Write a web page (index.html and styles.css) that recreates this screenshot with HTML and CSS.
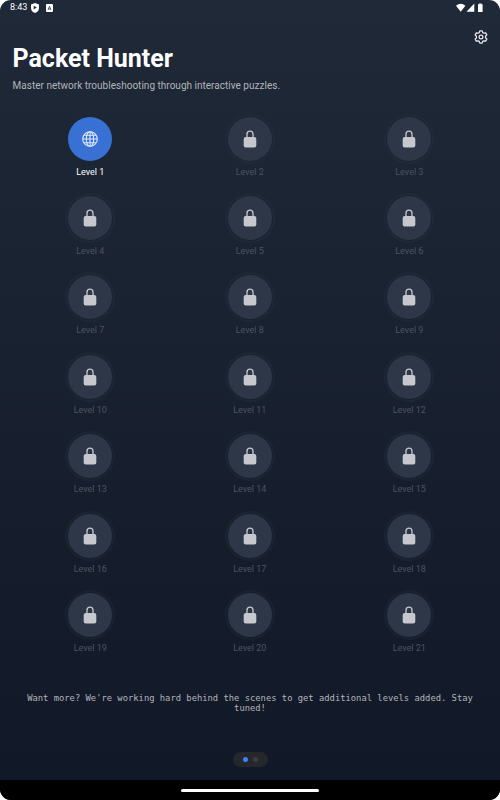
FILE: index.html
```
<!DOCTYPE html>
<html lang="en">
<head>
<meta charset="utf-8">
<title>Packet Hunter</title>
<link rel="stylesheet" href="styles.css">
</head>
<body>
<div class="screen">
  <header class="status">
    <span class="time">8:43</span>
    <svg class="shield" viewBox="0 0 8 10"><path fill="#fff" d="M4 0 8 1.500V5C8 7.500 6.200 9.300 4 10 1.800 9.300 0 7.500 0 5V1.500Z"/><path fill="#1f2937" d="M2.700 2.700 5.800 4.600 2.700 6.500Z"/></svg>
    <svg class="badge" viewBox="0 0 7 8"><rect width="7" height="8" rx="1" fill="#fff"/><path d="M2 6 3.500 2.200 5 6M2.500 4.900h2" fill="none" stroke="#344052" stroke-width=".8"/></svg>
    <svg class="signals" viewBox="0 0 28 10"><path fill="#fff" d="M0 2.700Q4.700-1.300 9.400 2.700L4.700 8.700ZM10.500 8.700 18.300.5v8.200ZM22 1.300h1V.4h2.500v.9h1.100v7.800H22Z"/></svg>
  </header>
  <div class="toolbar">
    <svg class="gear" viewBox="0 0 24 24" fill="none" stroke="#e5e7eb" stroke-width="2.200" stroke-linejoin="round"><path d="M9 4.500 10 1.500h4l1 3 1.800 1 3.200-.6 2 3.500-2.200 2.400v2.400l2.200 2.400-2 3.500-3.200-.6-1.800 1-1 3h-4l-1-3-1.800-1-3.200.6-2-3.500 2.200-2.400v-2.400L2 8.400l2-3.500 3.200.6Z"/><circle cx="12" cy="12" r="3.200"/></svg>
  </div>
  <h1 class="title">Packet Hunter</h1>
  <p class="subtitle">Master network troubleshooting through interactive puzzles.</p>
  <main class="levels" id="levels"></main>
  <p class="more">Want more? We're working hard behind the scenes to get additional levels added. Stay tuned!</p>
  <div class="pager"><i class="dot active"></i><i class="dot"></i></div>
  <footer class="nav"><div class="handle"></div></footer>
</div>
<script src="levels.js"></script>
</body>
</html>
```
FILE: levels.js
```
const globe = '<svg class="globe" viewBox="0 0 16 16" fill="none" stroke="#dbe7fb" stroke-width="1.100"><circle cx="8" cy="8" r="7.300"/><ellipse cx="8" cy="8" rx="3.700" ry="7.300"/><path d="M8 .7v14.600M.7 8h14.600M2 4.300h12M2 11.700h12"/></svg>';
const lock = '<svg class="lock" viewBox="0 0 14 18"><path d="M4 8V4.200a3 3 0 0 1 6 0V8" fill="none" stroke="#c5c8cd" stroke-width="1.300"/><rect x=".7" y="7" width="12.600" height="10.500" rx="2" fill="#c5c8cd"/></svg>';
const grid = document.getElementById('levels');
for (let n = 1; n <= 21; n++) {
  const open = n === 1;
  grid.insertAdjacentHTML('beforeend',
    `<div class="level ${open ? 'open' : 'locked'}"><div class="disc">${open ? globe : lock}</div><span class="label">Level ${n}</span></div>`);
}
```
FILE: styles.css
```
* { box-sizing: border-box; }
body { margin: 0; background: #fff; font-family: Roboto, sans-serif; color: #fff; }
.screen {
  width: 500px; height: 800px; overflow: hidden; border-radius: 11px;
  background: linear-gradient(#1f2937 0, #111827 780px);
  display: flex; flex-direction: column;
}
.status { height: 15px; flex: none; display: flex; align-items: center; padding-left: 10px; }
.time { font-size: 9px; line-height: 15px; width: 18px; white-space: nowrap; }
.shield { width: 8px; height: 10px; margin-left: 3px; }
.badge { width: 7px; height: 8px; margin-left: 7px; }
.signals { width: 28px; height: 10px; margin: 0 16.500px 0 auto; }
.toolbar { height: 30px; flex: none; display: flex; justify-content: flex-end; padding: 15px 12px 0 0; }
.gear { width: 14px; height: 14px; }
.title { margin: 0; padding-left: 12.500px; height: 30px; font-size: 25px; line-height: 27px; font-weight: 700; }
.subtitle { margin: 0; padding: 4px 0 0 12.500px; height: 31px; font-size: 10px; line-height: 13px; color: #b2b5ba; letter-spacing: .015px; }
.levels {
  flex: none; height: 556px; margin: 10.600px 10.900px 0 10.500px;
  display: grid; grid-template-columns: repeat(3, 1fr); grid-template-rows: repeat(7, 1fr);
}
.level { display: flex; flex-direction: column; align-items: center; }
.disc { width: 44px; height: 44px; border-radius: 50%; display: flex; align-items: center; justify-content: center; flex: none; }
.open .disc { background: #3871d3; }
.locked .disc { background: #2e3747; box-shadow: 0 0 0 1px rgba(17, 24, 39, .3), 0 0 0 3px rgba(52, 64, 80, .18); }
.globe { width: 16px; height: 16px; }
.lock { width: 14px; height: 18px; }
.label { margin-top: 5px; font-size: 9px; line-height: 12px; }
.locked .label { color: #4b5361; }
.more {
  margin: 20.400px 20px 0; height: 40px; flex: none; text-align: center;
  font: 8.820px/10.500px "DejaVu Sans Mono", monospace; color: #b3b5ba;
}
.pager {
  align-self: center; width: 35px; height: 15px; margin: 19.500px 0 0; border-radius: 8px; background: #25272c;
  display: flex; align-items: center; justify-content: center; gap: 5px; flex: none;
}
.dot { width: 5px; height: 5px; border-radius: 50%; background: #3c3d41; }
.dot.active { background: #3b82f6; }
.nav { height: 20px; flex: none; margin-top: auto; background: #000; display: flex; align-items: center; justify-content: center; }
.handle { width: 138px; height: 3px; border-radius: 2px; background: #fff; }
```
